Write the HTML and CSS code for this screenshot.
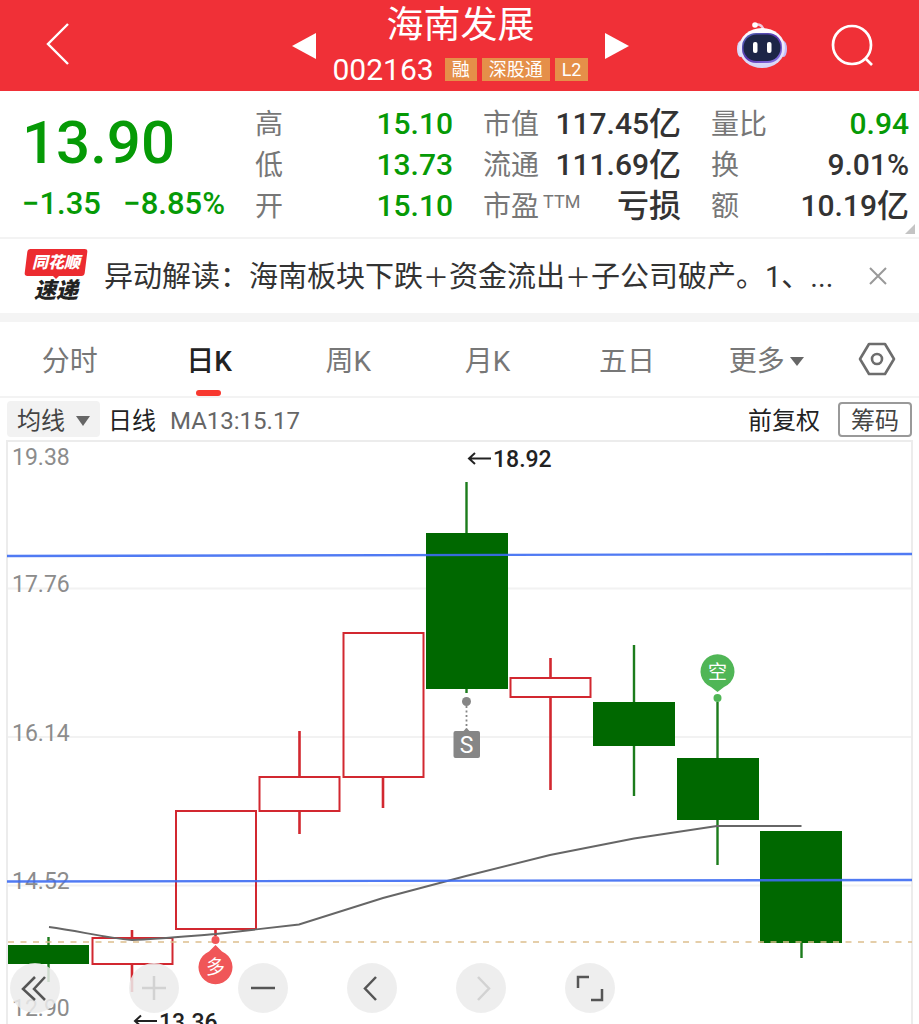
FILE: index.html
```html
<!DOCTYPE html>
<html lang="zh-CN">
<head>
<meta charset="utf-8">
<meta name="viewport" content="width=device-width, initial-scale=1">
<title>海南发展 002163</title>
<link rel="stylesheet" href="styles.css">
</head>
<body>
<header class="topbar">
  <div class="topbar-left">
    <button class="icon-btn" aria-label="返回"><svg width="26" height="44" viewBox="0 0 26 44"><path d="M23 2 3 22 23 42" fill="none" stroke="#fff" stroke-width="2.4"/></svg></button>
  </div>
  <div class="stock-nav">
    <button class="icon-btn" aria-label="上一只"><svg width="24" height="26" viewBox="0 0 24 26"><path d="M24 0V26L0 13Z" fill="#fff"/></svg></button>
    <div class="stock">
      <h1 class="stock-name">海南发展</h1>
      <div class="stock-meta"><span class="stock-code">002163</span><span class="badge">融</span><span class="badge">深股通</span><span class="badge">L2</span></div>
    </div>
    <button class="icon-btn" aria-label="下一只"><svg width="24" height="26" viewBox="0 0 24 26"><path d="M0 0V26L24 13Z" fill="#fff"/></svg></button>
  </div>
  <div class="topbar-right">
    <button class="icon-btn" aria-label="智能助手">
      <svg width="52" height="50" viewBox="0 0 52 50">
        <defs>
          <linearGradient id="shell" x1="0" y1="0" x2="0" y2="1"><stop offset="0" stop-color="#fff"/><stop offset=".55" stop-color="#e8e4fb"/><stop offset="1" stop-color="#d5d5f6"/></linearGradient>
          <linearGradient id="rim" x1="0" y1="0" x2="1" y2="1"><stop offset="0" stop-color="#4f68b8"/><stop offset=".5" stop-color="#5b35b0"/><stop offset="1" stop-color="#9080ee"/></linearGradient>
        </defs>
        <path d="M19 4Q25 2 28 9" fill="none" stroke="#efc9dc" stroke-width="2.500"/>
        <circle cx="19" cy="4" r="2.800" fill="#fff"/>
        <ellipse cx="4.500" cy="28" rx="3.500" ry="8" fill="#d9d9fa"/>
        <ellipse cx="47.500" cy="28" rx="3.500" ry="8" fill="#c3bcf8"/>
        <ellipse cx="26" cy="27" rx="23" ry="20" fill="url(#shell)"/>
        <rect x="6" y="12" width="40" height="30" rx="14" fill="url(#rim)"/>
        <rect x="7.500" y="13.500" width="37" height="26.500" rx="13" fill="#1c2547"/>
        <rect x="17" y="21" width="4.500" height="11" rx="2" fill="#fff"/>
        <rect x="31" y="21" width="4.500" height="11" rx="2" fill="#fff"/>
      </svg>
    </button>
    <button class="icon-btn" aria-label="搜索"><svg width="44" height="44" viewBox="0 0 44 44"><circle cx="21" cy="21" r="19" fill="none" stroke="#fff" stroke-width="2.700"/><path d="M34 34 41 41" stroke="#fff" stroke-width="2.700"/></svg></button>
  </div>
</header>

<main>
  <section class="quote">
    <div class="price">
      <div class="price-now">13.90</div>
      <div class="price-change"><span>−1.35</span><span>−8.85%</span></div>
    </div>
    <dl class="stats">
      <div class="stat"><dt>高</dt><dd class="down">15.10</dd></div>
      <div class="stat"><dt>低</dt><dd class="down">13.73</dd></div>
      <div class="stat"><dt>开</dt><dd class="down">15.10</dd></div>
    </dl>
    <dl class="stats">
      <div class="stat"><dt>市值</dt><dd>117.45<span class="unit">亿</span></dd></div>
      <div class="stat"><dt>流通</dt><dd>111.69<span class="unit">亿</span></dd></div>
      <div class="stat"><dt>市盈<span class="ttm">TTM</span></dt><dd><span class="unit">亏损</span></dd></div>
    </dl>
    <dl class="stats">
      <div class="stat"><dt>量比</dt><dd class="down">0.94</dd></div>
      <div class="stat"><dt>换</dt><dd>9.01%</dd></div>
      <div class="stat"><dt>额</dt><dd>10.19<span class="unit">亿</span></dd></div>
    </dl>
    <svg class="corner" width="10" height="10" viewBox="0 0 10 10"><path d="M10 0V10H0Z" fill="#c4c4c4"/></svg>
  </section>

  <section class="news">
    <div class="news-logo"><span class="news-brand">同花顺</span><span class="news-kind">速递</span></div>
    <a class="news-text" href="#news">异动解读：海南板块下跌<span class="plus">＋</span>资金流出<span class="plus">＋</span>子公司破产。1、...</a>
    <button class="icon-btn" aria-label="关闭"><svg width="18" height="18" viewBox="0 0 18 18"><path d="M1 1 17 17M17 1 1 17" stroke="#999" stroke-width="2"/></svg></button>
  </section>

  <nav class="tabs">
    <button class="tab">分时</button>
    <button class="tab tab-active">日K</button>
    <button class="tab">周K</button>
    <button class="tab">月K</button>
    <button class="tab">五日</button>
    <button class="tab">更多<svg width="14" height="9" viewBox="0 0 14 9"><path d="M0 0H14L7 9Z" fill="#666"/></svg></button>
    <button class="tab tab-settings" aria-label="设置"><svg width="38" height="34" viewBox="0 0 38 34"><path d="M11 2H27L36 17 27 32H11L2 17Z" fill="none" stroke="#6d6d6d" stroke-width="2.600" stroke-linejoin="round"/><circle cx="19" cy="17" r="5" fill="none" stroke="#6d6d6d" stroke-width="2.600"/></svg></button>
  </nav>

  <div class="indicator">
    <button class="ma-select">均线<svg width="14" height="10" viewBox="0 0 14 10"><path d="M0 0H14L7 10Z" fill="#666"/></svg></button>
    <span class="period">日线</span>
    <span class="ma-value">MA13:15.17</span>
    <button class="adjust">前复权</button>
    <button class="chips">筹码</button>
  </div>

  <section class="chart">
    <svg class="plot" viewBox="0 440 919 584" role="img" aria-label="日K线图">
      <g fill="none" stroke="#ececec" stroke-width="2">
        <path d="M7 1024V441H912V1024"/>
        <path d="M8 588.500H911M8 737H911M8 885.500H911" stroke="#f2f2f2"/>
      </g>
      <g class="axis">
        <text x="12" y="465">19.38</text>
        <text x="12" y="592">17.76</text>
        <text x="12" y="741">16.14</text>
        <text x="12" y="889">14.52</text>
        <text x="12" y="1016">12.90</text>
      </g>
      <g fill="#006800" stroke="#1c7c1c" stroke-width="2.400">
        <path d="M48.500 937V982M466.500 482V693M634 645V796M717.500 702V865M801.500 900V958"/>
        <g stroke="none">
          <rect x="8" y="945" width="81" height="19"/>
          <rect x="426" y="533" width="82" height="156"/>
          <rect x="593" y="702" width="82" height="44"/>
          <rect x="677" y="758" width="82" height="62"/>
          <rect x="760" y="831" width="82" height="112"/>
        </g>
      </g>
      <g fill="none" stroke="#d22830" stroke-width="2">
        <rect x="92.500" y="938" width="80" height="26"/>
        <rect x="176" y="811" width="80" height="118"/>
        <rect x="259.500" y="777" width="80" height="34"/>
        <rect x="343.500" y="633" width="80" height="144"/>
        <rect x="510.500" y="678" width="80" height="19"/>
        <path d="M132 930V938M132 964V992M215.500 929V936M299.500 731V777M299.500 811V834M383 777V808M550.500 658V678M550.500 697V790" stroke-width="2.600"/>
      </g>
      <path d="M8 942H912" fill="none" stroke="#ddbf8d" stroke-width="1.500" stroke-dasharray="6 6.500"/>
      <path d="M49 927C80 931 104 938 132 940 160 939 190 936 216 934L299 924.500 383 898 466 876 550 855 634 838.500 717 826H801.500" fill="none" stroke="#666" stroke-width="1.900"/>
      <path d="M7 556 912 554M7 881.500 912 880" stroke="#3d6cf2" stroke-opacity=".9" stroke-width="2.400"/>
      <g class="extreme">
        <path d="M491 458.500H469M475 453 469 458.500 475 464M157 1021H135M141 1015.500 135 1021 141 1026.500" fill="none" stroke="#222" stroke-width="2"/>
        <text x="493" y="467">18.92</text>
        <text x="159" y="1030">13.36</text>
      </g>
      <g fill="#868686">
        <circle cx="466.500" cy="701.500" r="4.500"/>
        <path d="M466.500 706V730" stroke="#868686" stroke-width="1.800" stroke-dasharray="2 2.500"/>
        <path d="M462.500 732 466.500 728 470.500 732Z"/>
        <rect x="453.500" y="731" width="26.500" height="27" rx="2"/>
        <text class="mark mark-s" x="466.500" y="753">S</text>
      </g>
      <g fill="#50b656">
        <path d="M717.500 692 711 687A17 17 0 1 1 724 687Z"/>
        <circle cx="717.500" cy="698" r="4"/>
        <text class="mark" x="717.500" y="679">空</text>
      </g>
      <g fill="#f05658">
        <path d="M215.500 945 209 951.500A17 17 0 1 0 222 951.500Z"/>
        <circle cx="215.500" cy="940" r="4"/>
        <text class="mark" x="215.500" y="974">多</text>
      </g>
    </svg>
    <div class="tools">
      <button class="tool tool-fold" aria-label="收起"><svg width="50" height="50" viewBox="0 0 50 50"><path d="M25 14 13 26 25 37M35 14 24 26 35 37"/></svg></button>
      <button class="tool tool-off" aria-label="放大"><svg width="50" height="50" viewBox="0 0 50 50"><path d="M13 25H37M25 13V37"/></svg></button>
      <button class="tool" aria-label="缩小"><svg width="50" height="50" viewBox="0 0 50 50"><path d="M13 25H37"/></svg></button>
      <button class="tool" aria-label="左移"><svg width="50" height="50" viewBox="0 0 50 50"><path d="M29 14 18 25.500 29 37"/></svg></button>
      <button class="tool tool-off" aria-label="右移"><svg width="50" height="50" viewBox="0 0 50 50"><path d="M22 14 33 25.500 22 37"/></svg></button>
      <button class="tool" aria-label="全屏"><svg width="50" height="50" viewBox="0 0 50 50"><path d="M13 25V14H24M37 26V37H26"/></svg></button>
    </div>
  </section>
</main>
</body>
</html>
```
FILE: styles.css
```css
* { box-sizing: border-box; }
body {
  margin: 0;
  background: #fff;
  color: #333;
  font-family: Roboto, "Noto Sans CJK SC", sans-serif;
}
button {
  margin: 0;
  padding: 0;
  border: 0;
  background: none;
  color: inherit;
  font: inherit;
}
svg { display: block; }
h1, dl, dd { margin: 0; }

.topbar {
  display: grid;
  grid-template-columns: 1fr 340px 1fr;
  align-items: center;
  height: 91px;
  background: #f03037;
  color: #fff;
}
.topbar-left { padding-left: 45px; }
.topbar-right {
  display: flex;
  justify-content: flex-end;
  align-items: center;
  gap: 43px;
  padding-right: 44px;
}
.stock-nav {
  display: flex;
  justify-content: space-between;
  align-items: center;
  padding-left: 2px;
}
.stock {
  display: flex;
  flex-direction: column;
  align-items: center;
}
.stock-name {
  padding-top: 2px;
  font-size: 37px;
  line-height: 46px;
  font-weight: 400;
}
.stock-meta {
  display: flex;
  align-items: center;
  gap: 5px;
  height: 42px;
}
.stock-code {
  margin-right: 6px;
  font-size: 30px;
  line-height: 42px;
}
.badge {
  padding: 0 7px;
  background: #e58f49;
  font-size: 18px;
  line-height: 23px;
}

.quote {
  position: relative;
  display: grid;
  grid-template-columns: 225px 1fr 1fr 1fr;
  gap: 30px;
  height: 148px;
  padding: 12px 10px 0 0;
  border-bottom: 2px solid #f3f3f3;
}
.price {
  padding-left: 22px;
  color: #069a06;
  font-weight: 500;
}
.price-now {
  font-size: 60px;
  line-height: 80px;
}
.price-change {
  display: flex;
  justify-content: space-between;
  font-size: 31px;
  line-height: 41px;
}
.stat {
  display: flex;
  justify-content: space-between;
  align-items: center;
  height: 41px;
}
.stat dt {
  display: flex;
  padding-top: 3px;
  color: #777;
  font-size: 28px;
  line-height: 38px;
}
.ttm {
  padding-left: 4px;
  font-size: 18px;
  line-height: 28px;
}
.stat dd {
  display: flex;
  align-items: center;
  font-size: 30px;
  line-height: 41px;
  font-weight: 500;
}
.unit {
  padding-bottom: 5px;
  font-family: "Noto Sans CJK SC", sans-serif;
  font-size: 32px;
  line-height: 36px;
}
.stat .down { color: #069a06; }
.corner {
  position: absolute;
  right: 4px;
  bottom: 3px;
}

.news {
  display: flex;
  align-items: center;
  height: 83px;
  padding: 0 32px 0 25px;
  border-bottom: 9px solid #f4f4f4;
}
.news-logo {
  display: flex;
  flex-direction: column;
  align-items: center;
  width: 62px;
  font-style: italic;
  font-weight: 900;
}
.news-brand {
  position: relative;
  z-index: 0;
  width: 60px;
  color: #fff;
  font-size: 16px;
  line-height: 27px;
  text-align: center;
}
.news-brand::before {
  content: "";
  position: absolute;
  inset: 0;
  z-index: -1;
  border-radius: 3px;
  background: #ec2b30;
  transform: skewX(-7deg);
}
.news-brand::after {
  content: "";
  position: absolute;
  top: 26px;
  left: 26px;
  border: 4px solid transparent;
  border-top-color: #ec2b30;
}
.news-kind {
  padding-top: 2px;
  color: #222;
  font-size: 22px;
  line-height: 25px;
}
.news-text {
  flex: 1;
  min-width: 0;
  margin-left: 17px;
  padding-top: 4px;
  overflow: hidden;
  color: #333;
  font-size: 29px;
  line-height: 41px;
  text-decoration: none;
  white-space: nowrap;
}
.plus { font-size: 26px; }

.tabs {
  display: grid;
  grid-template-columns: repeat(6, 1fr) 83px;
  height: 76px;
  border-bottom: 2px solid #f3f3f3;
}
.tab {
  position: relative;
  display: flex;
  justify-content: center;
  align-items: center;
  gap: 5px;
  padding-top: 5px;
  color: #777;
  font-size: 28px;
  line-height: 40px;
}
.tab-settings { padding-top: 0; }
.tab-active {
  color: #222;
  font-weight: 500;
}
.tab-active::after {
  content: "";
  position: absolute;
  bottom: 0;
  width: 25px;
  height: 6px;
  border-radius: 3px;
  background: #f8382f;
}

.indicator {
  display: flex;
  align-items: center;
  height: 42px;
  padding: 0 7px;
  font-size: 24px;
  line-height: 32px;
}
.ma-select {
  display: flex;
  align-items: center;
  gap: 11px;
  padding: 4px 10px 0;
  border-radius: 4px;
  background: #f2f2f2;
  color: #444;
}
.period {
  margin-left: 8px;
  padding-top: 4px;
  color: #222;
}
.ma-value {
  margin-left: 14px;
  padding-top: 4px;
  color: #666;
}
.adjust {
  margin-left: auto;
  padding-top: 4px;
  color: #222;
}
.chips {
  margin-left: 18px;
  padding: 3px 11px 0;
  border: 2px solid #999;
  border-radius: 4px;
  color: #444;
  line-height: 28px;
}

.chart { position: relative; }
.plot {
  width: 100%;
  height: auto;
}
.axis {
  fill: #8c8c8c;
  font-size: 23px;
}
.extreme {
  fill: #222;
  font-size: 23px;
  font-weight: 500;
}
.mark {
  fill: #fff;
  font-size: 19px;
  text-anchor: middle;
}
.mark-s { font-size: 23px; }
.tools {
  position: absolute;
  bottom: 11px;
  left: 10px;
  display: flex;
  gap: 59px;
}
.tool {
  border-radius: 50%;
  background: rgba(235, 235, 235, 0.86);
}
.tool path {
  fill: none;
  stroke: #555;
  stroke-width: 2.5;
}
.tool-fold { margin-right: 10px; }
.tool-off path { stroke: #d2d2d2; }
```
